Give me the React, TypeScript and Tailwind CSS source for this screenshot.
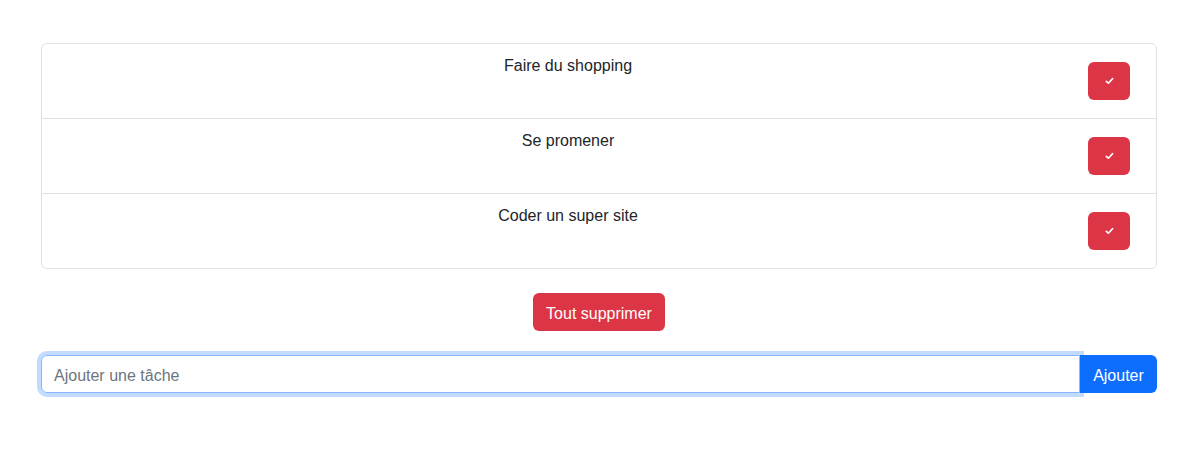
import React, { useState } from 'react';

type Task = { id: number; label: string };

const initialTasks: Task[] = [
  { id: 1, label: 'Faire du shopping' },
  { id: 2, label: 'Se promener' },
  { id: 3, label: 'Coder un super site' },
];

const CheckIcon: React.FC = () => (
  <svg width="9" height="8" viewBox="0 0 9 8" fill="none">
    <path d="M1.3 4.3 L3.4 6.2 L7.6 1.6" stroke="white" strokeWidth="1.6" strokeLinecap="round" strokeLinejoin="round" />
  </svg>
);

export default function App() {
  const [tasks, setTasks] = useState<Task[]>(initialTasks);
  const [value, setValue] = useState('');

  const addTask = () => {
    if (!value.trim()) return;
    setTasks([...tasks, { id: Date.now(), label: value.trim() }]);
    setValue('');
  };

  return (
    <div className="min-h-[460px] bg-white font-['Segoe_UI','Liberation_Sans',sans-serif] text-[16px] leading-6 text-[#212529]">
      <div className="ml-[41px] w-[1116px] pt-[43px]">
        {/* Task list */}
        <ul className="rounded-[6px] border border-[#dee2e6]">
          {tasks.map((task, i) => (
            <li
              key={task.id}
              className={`flex items-start px-4 py-2 ${i > 0 ? 'border-t border-[#dee2e6]' : ''}`}
            >
              <span className="flex-1 pt-[2px] text-center">{task.label}</span>
              <button
                onClick={() => setTasks(tasks.filter(t => t.id !== task.id))}
                className="m-[10px] flex h-[38px] w-[42px] items-center justify-center rounded-[6px] bg-[#dc3545]"
              >
                <CheckIcon />
              </button>
            </li>
          ))}
        </ul>

        <div className="mt-[24px] flex justify-center">
          <button
            onClick={() => setTasks([])}
            className="h-[38px] rounded-[6px] bg-[#dc3545] px-[13px] pt-[3px] text-white"
          >
            Tout supprimer
          </button>
        </div>

        {/* Add task */}
        <div className="mt-[24px] flex">
          <input
            autoFocus
            value={value}
            onChange={e => setValue(e.target.value)}
            placeholder="Ajouter une tâche"
            className="relative z-10 h-[38px] flex-1 rounded-l-[6px] border border-[#86b7fe] px-3 pt-[3px] text-[#212529] shadow-[0_0_0_4px_rgba(13,110,253,0.25)] outline-none placeholder:text-[#6c757d]"
          />
          <button
            onClick={addTask}
            className="relative z-20 h-[38px] w-[77px] rounded-r-[6px] bg-[#0d6efd] pt-[3px] text-white"
          >
            Ajouter
          </button>
        </div>
      </div>
    </div>
  );
}
